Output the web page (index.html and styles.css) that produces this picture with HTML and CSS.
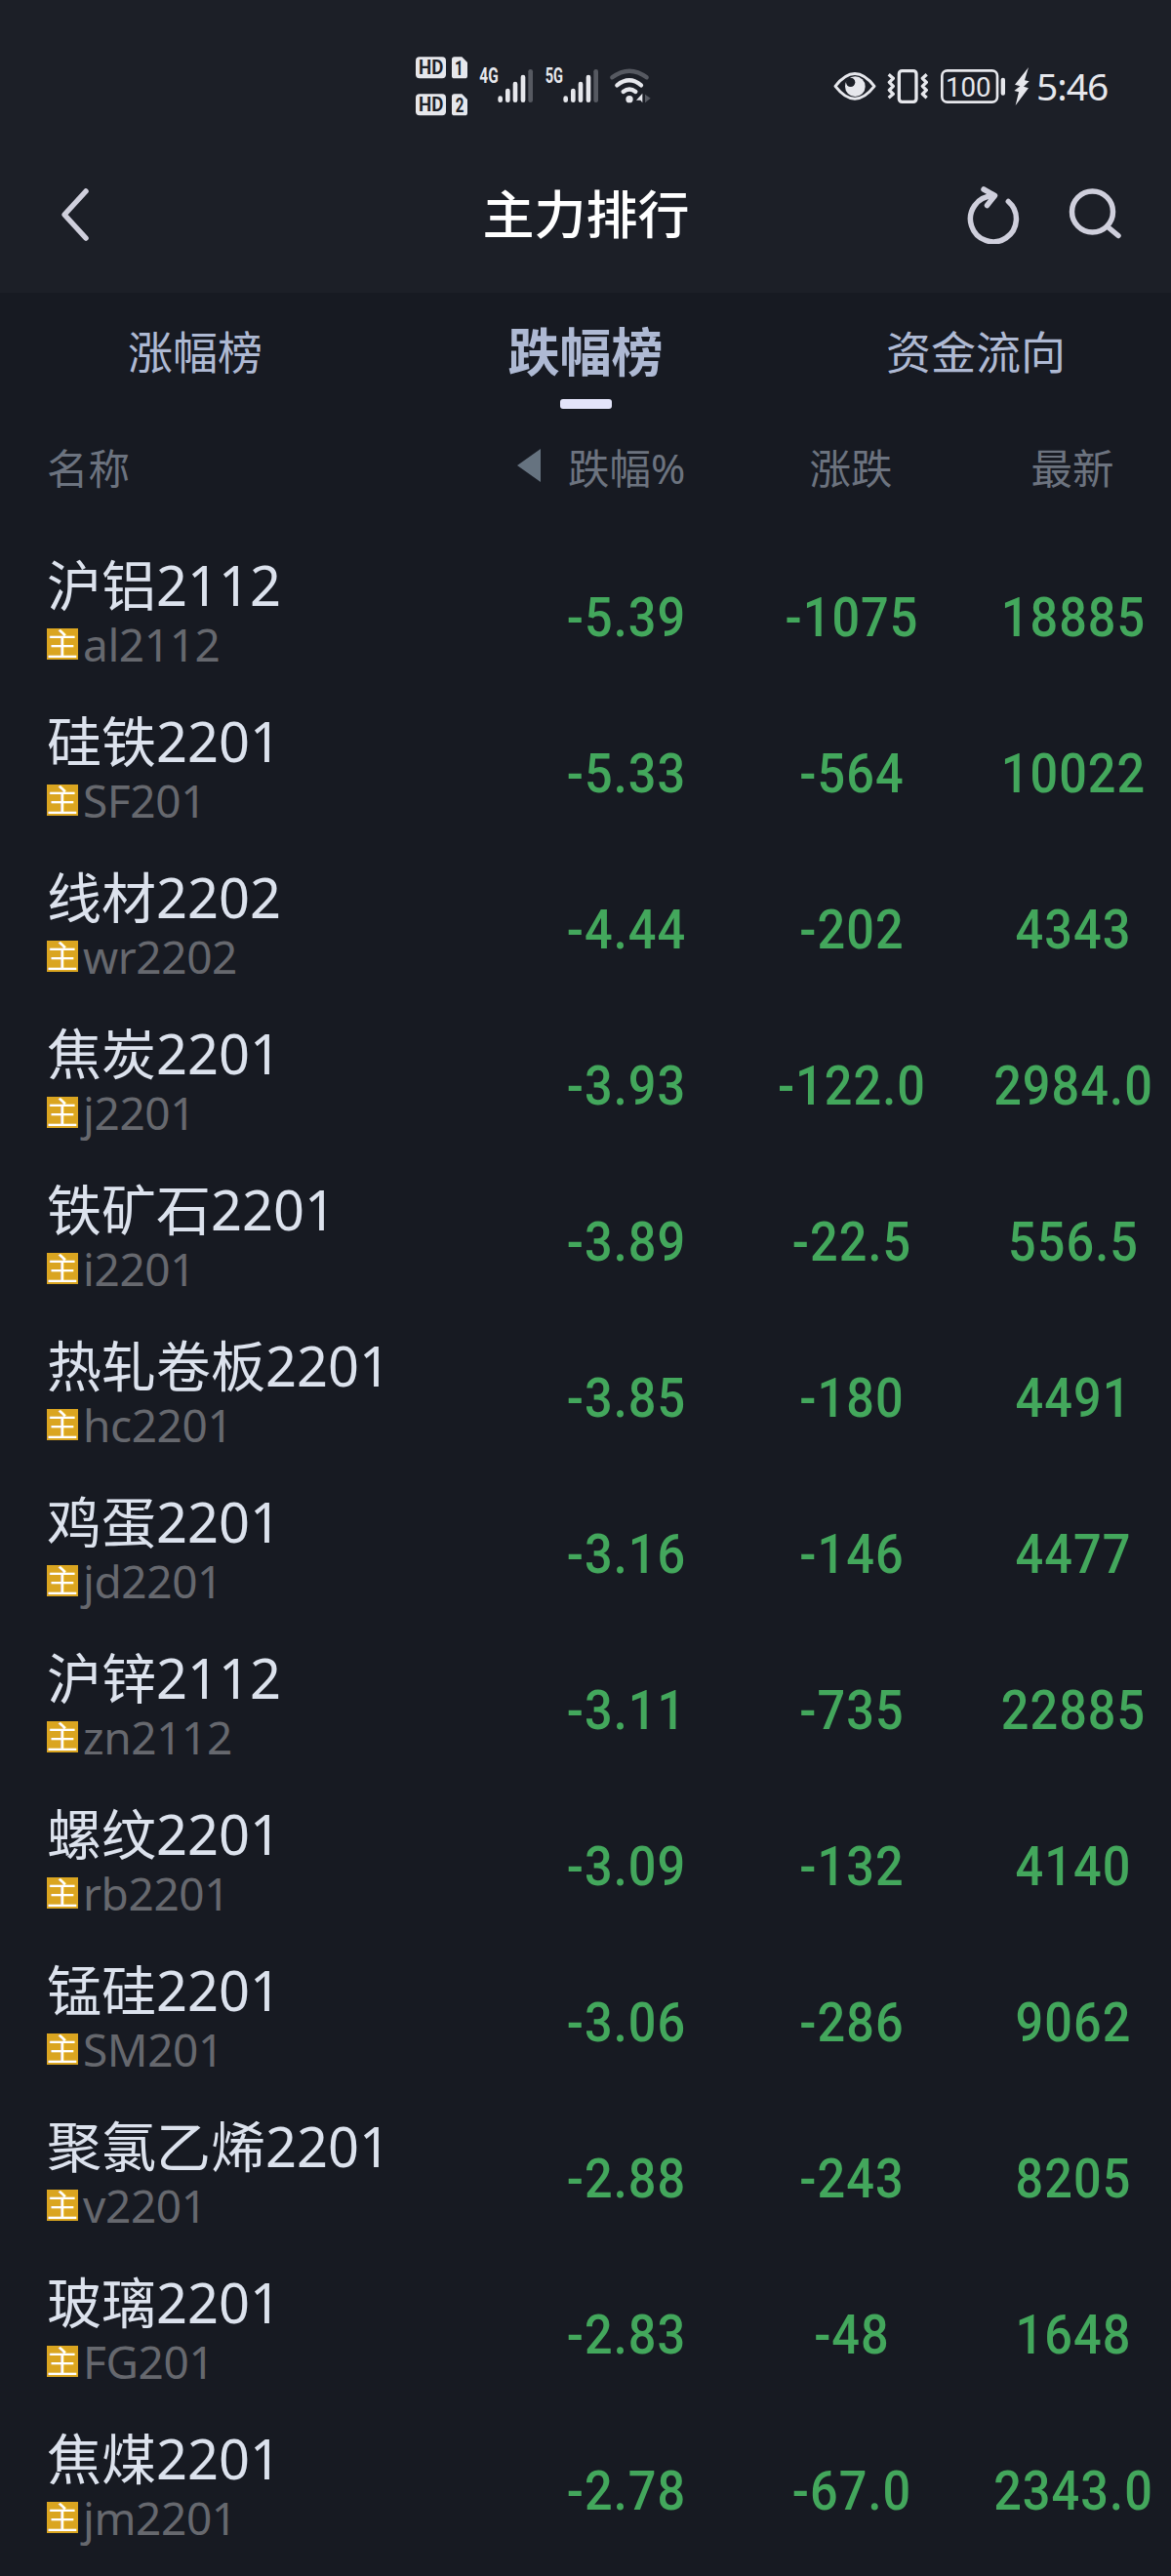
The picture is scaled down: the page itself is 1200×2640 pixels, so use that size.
FILE: index.html
```html
<!DOCTYPE html>
<html lang="zh-CN">

<head>
  <meta charset="UTF-8">
  <meta name="viewport" content="width=device-width, initial-scale=1.0">
  <title>主力排行</title>
  <link rel="stylesheet" href="styles.css">
</head>

<body>
  <div class="top">
    <!-- 状态栏 -->
    <div class="status">
      <svg class="hd" width="54" height="64" viewBox="78 50 162 192">
        <g fill="#e6e7ec">
          <rect x="78" y="57" width="93" height="66" rx="12" />
          <rect x="78" y="171" width="93" height="66" rx="12" />
          <path d="M197 57h23l17 17v41q0 8-8 8h-32q-8 0-8-8V65q0-8 8-8z" />
          <path d="M197 171h23l17 17v41q0 8-8 8h-32q-8 0-8-8v-50q0-8 8-8z" />
        </g>
        <g class="hd-text">
          <text x="87" y="111" textLength="76" lengthAdjust="spacingAndGlyphs">HD</text>
          <text x="87" y="225" textLength="76" lengthAdjust="spacingAndGlyphs">HD</text>
          <text x="198" y="112" textLength="26" lengthAdjust="spacingAndGlyphs">1</text>
          <text x="200" y="226" textLength="26" lengthAdjust="spacingAndGlyphs">2</text>
        </g>
      </svg>
      <svg class="signal" width="56" height="64" viewBox="272 50 168 192">
        <text class="net" x="273" y="138" textLength="58" lengthAdjust="spacingAndGlyphs">4G</text>
        <g class="bars">
          <path d="M337 184v6M360 161v29M383 140v50M407 119v71" />
          <path class="dim" d="M430 102v88" />
        </g>
      </svg>
      <svg class="signal" width="56" height="64" viewBox="473 50 168 192">
        <text class="net" x="475" y="138" textLength="55" lengthAdjust="spacingAndGlyphs">5G</text>
        <g class="bars">
          <path d="M538 184v6M561 161v29M584 140v50M608 119v71" />
          <path class="dim" d="M631 102v88" />
        </g>
      </svg>
      <svg class="wifi" width="44" height="64" viewBox="668 50 132 192">
        <g fill="none" stroke="#e6e7ec" stroke-width="13" stroke-linecap="round">
          <path stroke="#565961" d="M678 120Q731 80 784 120" />
          <path d="M693 144Q731 114 767 144" />
          <path d="M712 164Q731 149 750 164" />
        </g>
        <circle cx="731" cy="187" r="11" fill="#e6e7ec" />
        <path d="M771 169v29l-6-8h-13z" fill="#e6e7ec" />
        <path d="M779 172l17 12-17 14z" fill="#565961" />
      </svg>

      <svg class="eye" width="44" height="64" viewBox="37 18 132 192">
        <path d="M43 115Q103 38 163 115Q103 192 43 115z" fill="none" stroke="#e6e7ec" stroke-width="9" stroke-linejoin="round" />
        <circle cx="104" cy="116" r="31" fill="#e6e7ec" />
        <circle cx="90" cy="103" r="14" fill="#1c1f27" />
      </svg>
      <svg class="vibrate" width="42" height="64" viewBox="202 18 126 192">
        <g fill="none" stroke="#e6e7ec" stroke-width="10" stroke-linejoin="round">
          <rect x="239" y="68" width="53" height="95" rx="9" />
          <path d="M207 79l14 12-12 12 12 12-12 12 12 12-14 12M324 79l-13 12 12 12-12 12 12 12-12 12 13 12" />
        </g>
      </svg>
      <svg class="battery" width="67" height="64" viewBox="367 18 201 192">
        <rect x="371" y="67" width="170" height="97" rx="16" fill="none" stroke="#e6e7ec" stroke-width="8" />
        <rect x="552" y="89" width="13" height="54" rx="6" fill="#e6e7ec" />
        <text class="power" x="382" y="147" textLength="140" lengthAdjust="spacingAndGlyphs">100</text>
      </svg>
      <svg class="bolt" width="16" height="64" viewBox="593 18 48 192">
        <path d="M638 57l-42 53 16 5-18 14 14 4-10 41 40-53-15-5 17-16-14-3z" fill="#e6e7ec" />
      </svg>
      <span class="time">5:46</span>
    </div>

    <!-- 标题栏 -->
    <div class="header">
      <svg class="back" width="40" height="60" viewBox="0 0 40 60">
        <path d="M28 6L6 30l22 24" />
      </svg>
      <h1>主力排行</h1>
      <div class="tools">
        <svg width="60" height="60" viewBox="0 0 60 60">
          <path d="M45.3 16.5A23.5 23.5 0 1 1 29 10.8M20 4l11.500 6.500-8 10" />
        </svg>
        <svg width="60" height="60" viewBox="0 0 60 60">
          <circle cx="29.500" cy="27" r="21" />
          <path d="M44.500 42L56 51.500" />
        </svg>
      </div>
    </div>
  </div>

  <div class="tabs">
    <a class="tab">涨幅榜</a>
    <a class="tab active">跌幅榜</a>
    <a class="tab">资金流向</a>
  </div>

  <div class="line thead">
    <span class="name">名称</span>
    <span class="rate"><i class="arrow"></i>跌幅%</span>
    <span class="change">涨跌</span>
    <span class="price">最新</span>
  </div>

  <ul class="list">
    <li class="line">
      <div class="name"><p>沪铝2112</p><p class="code"><i>主</i>al2112</p></div>
      <span class="rate">-5.39</span><span class="change">-1075</span><span class="price">18885</span>
    </li>
    <li class="line">
      <div class="name"><p>硅铁2201</p><p class="code"><i>主</i>SF201</p></div>
      <span class="rate">-5.33</span><span class="change">-564</span><span class="price">10022</span>
    </li>
    <li class="line">
      <div class="name"><p>线材2202</p><p class="code"><i>主</i>wr2202</p></div>
      <span class="rate">-4.44</span><span class="change">-202</span><span class="price">4343</span>
    </li>
    <li class="line">
      <div class="name"><p>焦炭2201</p><p class="code"><i>主</i>j2201</p></div>
      <span class="rate">-3.93</span><span class="change">-122.0</span><span class="price">2984.0</span>
    </li>
    <li class="line">
      <div class="name"><p>铁矿石2201</p><p class="code"><i>主</i>i2201</p></div>
      <span class="rate">-3.89</span><span class="change">-22.5</span><span class="price">556.5</span>
    </li>
    <li class="line">
      <div class="name"><p>热轧卷板2201</p><p class="code"><i>主</i>hc2201</p></div>
      <span class="rate">-3.85</span><span class="change">-180</span><span class="price">4491</span>
    </li>
    <li class="line">
      <div class="name"><p>鸡蛋2201</p><p class="code"><i>主</i>jd2201</p></div>
      <span class="rate">-3.16</span><span class="change">-146</span><span class="price">4477</span>
    </li>
    <li class="line">
      <div class="name"><p>沪锌2112</p><p class="code"><i>主</i>zn2112</p></div>
      <span class="rate">-3.11</span><span class="change">-735</span><span class="price">22885</span>
    </li>
    <li class="line">
      <div class="name"><p>螺纹2201</p><p class="code"><i>主</i>rb2201</p></div>
      <span class="rate">-3.09</span><span class="change">-132</span><span class="price">4140</span>
    </li>
    <li class="line">
      <div class="name"><p>锰硅2201</p><p class="code"><i>主</i>SM201</p></div>
      <span class="rate">-3.06</span><span class="change">-286</span><span class="price">9062</span>
    </li>
    <li class="line">
      <div class="name"><p>聚氯乙烯2201</p><p class="code"><i>主</i>v2201</p></div>
      <span class="rate">-2.88</span><span class="change">-243</span><span class="price">8205</span>
    </li>
    <li class="line">
      <div class="name"><p>玻璃2201</p><p class="code"><i>主</i>FG201</p></div>
      <span class="rate">-2.83</span><span class="change">-48</span><span class="price">1648</span>
    </li>
    <li class="line">
      <div class="name"><p>焦煤2201</p><p class="code"><i>主</i>jm2201</p></div>
      <span class="rate">-2.78</span><span class="change">-67.0</span><span class="price">2343.0</span>
    </li>
  </ul>
</body>

</html>
```
FILE: styles.css
```css
* {
  margin: 0;
  padding: 0;
  box-sizing: border-box;
}

body {
  width: 1200px;
  height: 2640px;
  overflow: hidden;
  background-color: #171a22;
  font-family: "Noto Sans", "Noto Sans CJK SC", sans-serif;
}

li {
  list-style-type: none;
}

i {
  font-style: normal;
}

.top {
  height: 300px;
  background-color: #1c1f27;
}

/* 状态栏 */
.status {
  display: flex;
  align-items: center;
  height: 140px;
  padding: 36px 0 0 426px;
  color: #e6e7ec;
}

.status svg {
  flex: none;
}

.status .signal {
  margin-left: 11px;
}

.status .wifi {
  margin-left: 10px;
}

.status .eye {
  margin-left: 186px;
}

.status .vibrate {
  margin-left: 11px;
}

.status .battery {
  margin-left: 13px;
}

.status .bolt {
  margin-left: 8px;
}

.hd-text text {
  font: 700 60px Roboto, sans-serif;
  fill: #1c1f27;
}

.net {
  font: 700 64px Roboto, sans-serif;
  fill: #e6e7ec;
}

.bars path {
  fill: none;
  stroke: #e6e7ec;
  stroke-width: 14;
  stroke-linecap: round;
}

.bars .dim {
  stroke: #565961;
}

.power {
  font: 400 84px Roboto, sans-serif;
  fill: #e6e7ec;
}

.time {
  margin-left: 7px;
  font-size: 39px;
  line-height: 64px;
  letter-spacing: -1px;
}

/* 标题栏 */
.header {
  display: grid;
  grid-template-columns: 200px 1fr 200px;
  align-items: center;
  height: 160px;
  padding: 0 16px 0 60px;
}

.header svg {
  fill: none;
  stroke: #cfcfdc;
  stroke-width: 5.5;
  stroke-linecap: round;
  stroke-linejoin: round;
}

.header h1 {
  padding-right: 43px;
  font-size: 53px;
  font-weight: 500;
  line-height: 80px;
  text-align: center;
  color: #fff;
}

.header .tools {
  display: flex;
  justify-content: flex-end;
  gap: 42px;
  padding-right: 34px;
}

/* 切换标签 */
.tabs {
  display: grid;
  grid-template-columns: repeat(3, 1fr);
  height: 120px;
}

.tab {
  display: flex;
  flex-direction: column;
  align-items: center;
  font-size: 46px;
  line-height: 121px;
  color: #aeb9d3;
}

.tab.active {
  font-size: 53px;
  font-weight: 700;
}

.tab.active::after {
  content: "";
  width: 53px;
  height: 10px;
  margin-top: -12px;
  border-radius: 3px;
  background-color: #e3e4fa;
}

/* 行情列表 */
.line {
  display: grid;
  grid-template-columns: 482px 222px 240px 214px;
  height: 160px;
  padding-left: 48px;
}

.thead {
  align-items: center;
  height: 120px;
  padding-bottom: 5px;
  font-size: 42.5px;
  color: #6c737f;
}

.thead .rate {
  display: flex;
  align-items: center;
}

.arrow {
  margin: -2px 28px 0 0;
  border: 17px solid transparent;
  border-right: 24px solid #667380;
  border-left: 0;
}

.change,
.price {
  text-align: center;
}

.list {
  padding-top: 10px;
}

.list .name {
  padding-top: 17px;
  font-size: 56px;
  line-height: 64px;
  color: #dce2ed;
}

.list .code {
  display: flex;
  align-items: center;
  height: 52px;
  margin-top: 3px;
  font-size: 46px;
  line-height: 50px;
  letter-spacing: -0.4px;
  color: #66686e;
}

.code i {
  width: 32px;
  height: 32px;
  margin-right: 5px;
  font-size: 32px;
  line-height: 31px;
  letter-spacing: 0;
  color: #fff;
  background-color: #daa520;
}

/* 数字用窄体 */
.list span {
  font-family: Roboto, sans-serif;
  font-size: 56px;
  font-weight: 500;
  line-height: 166px;
  letter-spacing: 1.2px;
  color: #43a75c;
  transform: translateX(1px) scaleX(0.9);
}

.list .rate {
  text-align: center;
}
```
